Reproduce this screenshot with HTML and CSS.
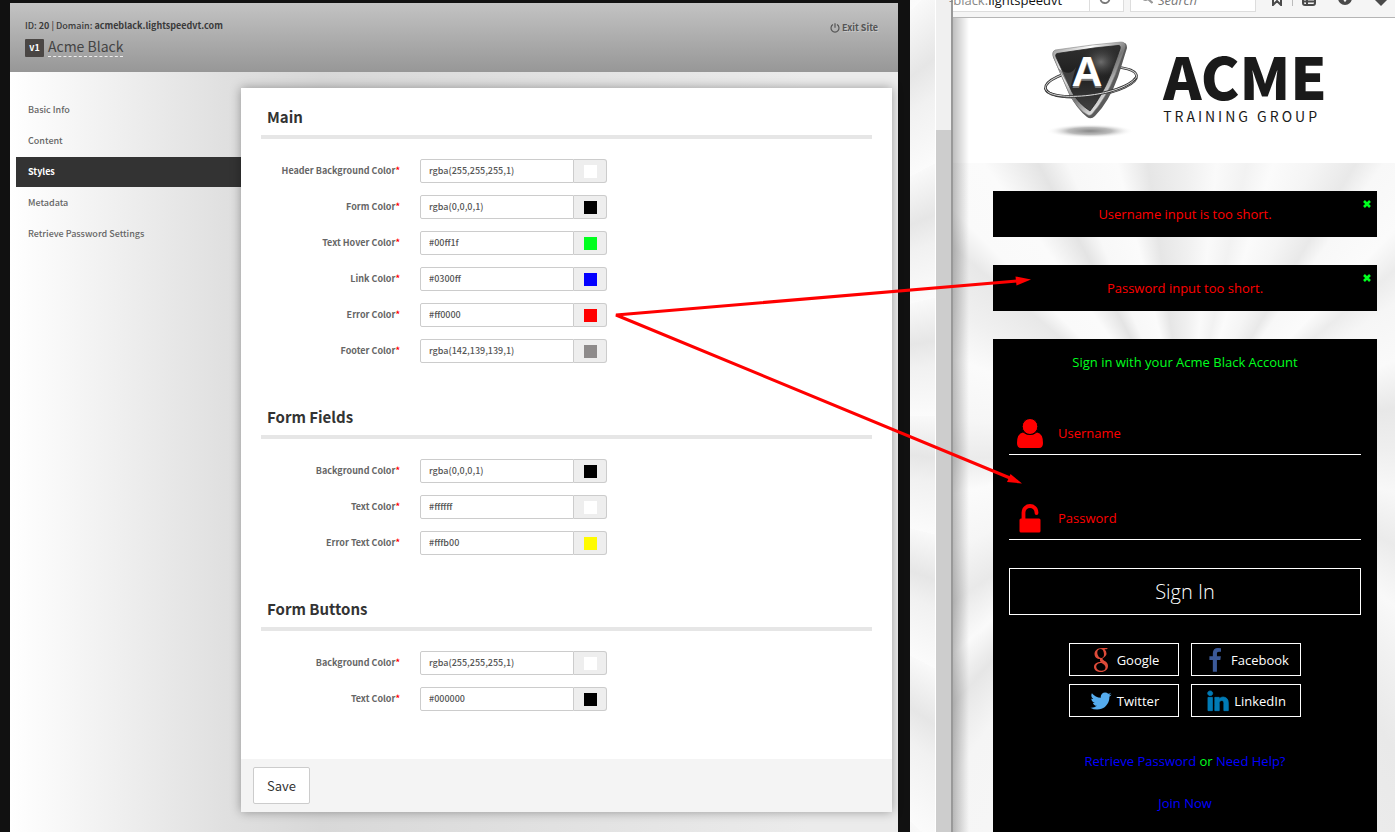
FILE: index.html
```html
<!DOCTYPE html>
<html lang="en">
<head>
<meta charset="utf-8">
<title>Acme Black – Styles</title>
<link rel="stylesheet" href="styles.css">
</head>
<body>
<div class="desktop">
  <section class="admin">
    <header class="admin-header">
      <div>
        <p class="site-id">ID: <b>20</b> | Domain: <b>acmeblack.lightspeedvt.com</b></p>
        <div class="site-title"><span class="version">v1</span><h1 class="site-name">Acme Black</h1></div>
      </div>
      <a class="exit" href="#exit">
        <svg class="exit-icon" viewBox="0 0 10 10"><path d="M3 1.6a4 4 0 1 0 4 0M5 .3v4.4" fill="none" stroke="currentColor" stroke-width="1.2"/></svg>
        Exit Site
      </a>
    </header>
    <div class="admin-body">
      <nav class="side-nav">
        <a class="side-link" href="#basic">Basic Info</a>
        <a class="side-link" href="#content">Content</a>
        <a class="side-link is-active" href="#styles">Styles</a>
        <a class="side-link" href="#metadata">Metadata</a>
        <a class="side-link" href="#retrieve">Retrieve Password Settings</a>
      </nav>
      <form class="panel">
        <div class="panel-content">
          <section class="group">
            <h2 class="group-title">Main</h2>
            <div class="fields">
              <div class="field"><label class="label" for="c1">Header Background Color<i class="req">*</i></label><div class="control"><input class="value" id="c1" value="rgba(255,255,255,1)"><button class="picker" type="button" aria-label="Pick header background color"><span class="swatch white"></span></button></div></div>
              <div class="field"><label class="label" for="c2">Form Color<i class="req">*</i></label><div class="control"><input class="value" id="c2" value="rgba(0,0,0,1)"><button class="picker" type="button" aria-label="Pick form color"><span class="swatch black"></span></button></div></div>
              <div class="field"><label class="label" for="c3">Text Hover Color<i class="req">*</i></label><div class="control"><input class="value" id="c3" value="#00ff1f"><button class="picker" type="button" aria-label="Pick text hover color"><span class="swatch green"></span></button></div></div>
              <div class="field"><label class="label" for="c4">Link Color<i class="req">*</i></label><div class="control"><input class="value" id="c4" value="#0300ff"><button class="picker" type="button" aria-label="Pick link color"><span class="swatch blue"></span></button></div></div>
              <div class="field"><label class="label" for="c5">Error Color<i class="req">*</i></label><div class="control"><input class="value" id="c5" value="#ff0000"><button class="picker" type="button" aria-label="Pick error color"><span class="swatch red"></span></button></div></div>
              <div class="field"><label class="label" for="c6">Footer Color<i class="req">*</i></label><div class="control"><input class="value" id="c6" value="rgba(142,139,139,1)"><button class="picker" type="button" aria-label="Pick footer color"><span class="swatch gray"></span></button></div></div>
            </div>
          </section>
          <section class="group">
            <h2 class="group-title">Form Fields</h2>
            <div class="fields">
              <div class="field"><label class="label" for="c7">Background Color<i class="req">*</i></label><div class="control"><input class="value" id="c7" value="rgba(0,0,0,1)"><button class="picker" type="button" aria-label="Pick field background color"><span class="swatch black"></span></button></div></div>
              <div class="field"><label class="label" for="c8">Text Color<i class="req">*</i></label><div class="control"><input class="value" id="c8" value="#ffffff"><button class="picker" type="button" aria-label="Pick field text color"><span class="swatch white"></span></button></div></div>
              <div class="field"><label class="label" for="c9">Error Text Color<i class="req">*</i></label><div class="control"><input class="value" id="c9" value="#fffb00"><button class="picker" type="button" aria-label="Pick error text color"><span class="swatch yellow"></span></button></div></div>
            </div>
          </section>
          <section class="group">
            <h2 class="group-title">Form Buttons</h2>
            <div class="fields">
              <div class="field"><label class="label" for="c10">Background Color<i class="req">*</i></label><div class="control"><input class="value" id="c10" value="rgba(255,255,255,1)"><button class="picker" type="button" aria-label="Pick button background color"><span class="swatch white"></span></button></div></div>
              <div class="field"><label class="label" for="c11">Text Color<i class="req">*</i></label><div class="control"><input class="value" id="c11" value="#000000"><button class="picker" type="button" aria-label="Pick button text color"><span class="swatch black"></span></button></div></div>
            </div>
          </section>
        </div>
        <footer class="panel-footer"><button class="save" type="button">Save</button></footer>
      </form>
    </div>
  </section>

  <div class="backdrop"></div>
  <div class="scrollbar"><div class="thumb"></div></div>

  <section class="browser">
    <div class="toolbar">
      <div class="url"><span class="url-text"><span class="url-dim">-black.</span>lightspeedvt</span><svg class="reload" viewBox="0 0 12 12"><path d="M1.5 5a4.5 4.5 0 0 0 9 1" fill="none" stroke="#777" stroke-width="1.8"/></svg></div>
      <div class="search"><svg class="lens" viewBox="0 0 12 12"><circle cx="4.5" cy="4.500" r="3.500" fill="none" stroke="#999" stroke-width="1.800"/><path d="M7 7l4.500 4" stroke="#999" stroke-width="2.200"/></svg><span class="search-text">Search</span></div>
      <svg class="tool star" viewBox="0 0 12 14"><path d="M2 0v13l4-4 4 4V0" fill="none" stroke="#4a4a4a" stroke-width="2"/></svg>
      <span class="divider"></span>
      <svg class="tool" viewBox="0 0 14 14"><path d="M1 5v6q0 2 2 2h8q2 0 2-2V5M0 9.500h14M5 5v8" fill="none" stroke="#4a4a4a" stroke-width="2"/></svg>
      <svg class="tool round" viewBox="0 0 14 14"><circle cx="7" cy="7" r="7" fill="#4a4a4a"/><path d="M5 7l2 3 2-3" fill="none" stroke="#f5f5f5" stroke-width="1.500"/></svg>
      <svg class="tool" viewBox="0 0 14 14"><path d="M0 7l7 7 7-7z" fill="#4a4a4a"/></svg>
    </div>
    <header class="brand">
      <svg class="shield" viewBox="0 0 100 100">
        <defs>
          <linearGradient id="rim" x1="0" y1="0" x2="1" y2="1"><stop offset="0" stop-color="#8c8c8c"/><stop offset=".3" stop-color="#fff"/><stop offset=".55" stop-color="#777"/><stop offset=".75" stop-color="#ddd"/><stop offset="1" stop-color="#666"/></linearGradient>
          <linearGradient id="core" x1="0" y1="0" x2="0" y2="1"><stop offset="0" stop-color="#303030"/><stop offset=".45" stop-color="#1f1f1f"/><stop offset="1" stop-color="#424242"/></linearGradient>
          <radialGradient id="shine"><stop offset="0" stop-color="#9b9b9b"/><stop offset="1" stop-color="#444" stop-opacity="0"/></radialGradient>
          <radialGradient id="ground"><stop offset="0" stop-color="#888"/><stop offset=".5" stop-color="#aaa" stop-opacity=".8"/><stop offset="1" stop-color="#fff" stop-opacity="0"/></radialGradient>
        </defs>
        <ellipse cx="49" cy="91" rx="44" ry="7" fill="url(#ground)"/>
        <ellipse cx="50" cy="42" rx="46" ry="14" transform="rotate(-8 50 42)" fill="none" stroke="#333" stroke-width="2.600"/>
        <ellipse cx="50" cy="42" rx="46" ry="14" transform="rotate(-8 50 42)" fill="none" stroke="#d0d0d0" stroke-width="1"/>
        <path d="M13 11Q11 12 12 17L28 54Q36 69 46 77Q50 80 54 76Q68 62 77 37L86 8Q86 2 81 3L53 5Z" fill="#5b5b5b"/>
        <path d="M14 10Q11 11 12 16L28 53Q37 70 47 75Q49 76 51 74Q65 58 74 35L84 7Q85 2 80 2L51 5Z" fill="url(#rim)" stroke="#888" stroke-width=".6"/>
        <path d="M16 13.500L53 8 77 5.500Q80 5 79 9L70 34Q61 56 49 71Q37 63 31 52L15 17Q14 14 16 13.500Z" fill="url(#core)" stroke="#222" stroke-width=".8"/>
        <ellipse cx="60" cy="22" rx="20" ry="17" fill="url(#shine)" opacity=".6"/>
        <path d="M17 28Q29 38 35 27L29 48Z" fill="#555" opacity=".6"/>
        <text class="shield-letter shade" x="46" y="48">A</text>
        <text class="shield-letter" x="46" y="46">A</text>
        <path d="M4.500 48C5 63 82 57 95.500 37" fill="none" stroke="#333" stroke-width="2.600"/>
        <path d="M4.500 48C5 63 82 57 95.500 37" fill="none" stroke="#ddd" stroke-width="1"/>
      </svg>
      <div class="wordmark"><span class="word">ACME</span><span class="tagline">TRAINING GROUP</span></div>
    </header>
    <main class="login">
      <div class="alert">Username input is too short.<button class="close" type="button" aria-label="Close"><svg class="cross" viewBox="0 0 8 8"><path d="M1 1l6 6M7 1L1 7" stroke="#00ff1f" stroke-width="2.600"/></svg></button></div>
      <div class="alert">Password input too short.<button class="close" type="button" aria-label="Close"><svg class="cross" viewBox="0 0 8 8"><path d="M1 1l6 6M7 1L1 7" stroke="#00ff1f" stroke-width="2.600"/></svg></button></div>
      <form class="card">
        <p class="card-title">Sign in with your Acme Black Account</p>
        <label class="entry"><svg class="entry-icon" viewBox="0 0 26 29"><path d="M6 13.500Q13 18.500 20 13.500Q26 14.500 26 24Q26 29 22 29H4Q0 29 0 24Q0 14.500 6 13.500Z" fill="red"/><ellipse cx="13" cy="7.500" rx="7.800" ry="8" fill="red" stroke="#000"/></svg><input class="entry-input" type="text" placeholder="Username" aria-label="Username"></label>
        <label class="entry"><svg class="entry-icon" viewBox="0 0 26 29"><path d="M6.500 15V8.500a6.500 6.500 0 0 1 13 0V9" fill="none" stroke="red" stroke-width="3.800" stroke-linecap="round"/><rect x="2.500" y="14.500" width="21" height="14" rx="1.500" fill="red"/></svg><input class="entry-input" type="password" placeholder="Password" aria-label="Password"></label>
        <button class="sign-in" type="button">Sign In</button>
        <div class="socials">
          <button class="social" type="button"><svg class="social-icon" viewBox="0 0 24 24"><path fill="#dd4b39" fill-rule="evenodd" d="M19 0H13C8 0 5.500 3 5.500 6C5.500 9 8 11 11 11Q10.500 13 11.700 14C8 14 5 15.500 5 19C5 22 8 24 12 24C16 24 19 21.500 19 18C19 13 13.500 13 13.500 10.800C13.500 9.500 17.500 9 17.500 5.500Q17.500 3 15.500 1.300H17.500ZM11.800 1C14 1 15 4 15 6.500C15 8.700 14 10 12.200 10C10 10 8.300 7 8.300 4.500C8.300 2.500 9.500 1 11.800 1ZM12.500 15C15 16.500 16.500 17.500 16.500 19.500C16.500 21.500 15 22.800 12.300 22.800C9 22.800 7.200 21 7.200 18.800C7.200 16.500 9.500 15 12.500 15Z"/></svg>Google</button>
          <button class="social" type="button"><svg class="social-icon" viewBox="0 0 1792 1792"><path fill="#3b5998" d="M1343 12v264h-157q-86 0-116 36t-30 108v189h293l-39 296h-254v875h-306v-875h-255v-296h255v-218q0-186 104-288.500t277-102.500q147 0 228 12z"/></svg>Facebook</button>
          <button class="social" type="button"><svg class="social-icon" viewBox="0 0 1792 1792"><path fill="#55acee" d="M1684 408q-67 98-162 167 1 14 1 42 0 130-38 259.500t-115.500 248.500-184.500 210.500-258 146-323 54.500q-271 0-496-145 35 4 78 4 225 0 401-138-105-2-188-64.500t-114-159.500q33 5 61 5 43 0 85-11-112-23-185.500-111.500t-73.500-205.500v-4q68 38 146 41-66-44-105-115t-39-154q0-88 44-163 121 149 294.500 238.500t371.500 99.500q-8-38-8-74 0-134 94.500-228.500t228.500-94.500q140 0 236 102 109-21 205-78-37 115-142 178 93-10 186-50z"/></svg>Twitter</button>
          <button class="social" type="button"><svg class="social-icon" viewBox="0 0 1792 1792"><path fill="#007bb6" stroke="#007bb6" stroke-width="60" d="M477 625v991h-330v-991h330zm21-306q1 73-50.500 122t-135.500 49h-2q-82 0-132-49t-50-122q0-74 51.500-122.500t134.500-48.500 133 48.500 51 122.500zm1166 729v568h-329v-530q0-105-40.500-164.500t-126.500-59.500q-63 0-105.500 34.500t-63.500 85.500q-11 30-11 81v553h-329q2-399 2-647t-1-296l-1-48h329v144h-2q20-32 41-56t56.500-52 87-43.500 114.500-15.500q171 0 275 113.500t104 332.500z"/></svg>LinkedIn</button>
        </div>
        <p class="help"><a class="link" href="#retrieve-password">Retrieve Password</a> or <a class="link" href="#help">Need Help?</a></p>
        <p class="join"><a class="link" href="#join">Join Now</a></p>
      </form>
    </main>
  </section>

  <svg class="arrows" viewBox="0 0 1395 832" preserveAspectRatio="none" aria-hidden="true">
    <path d="M1017 281L616 315L1010 478" fill="none" stroke="red" stroke-width="3"/>
    <path d="M1031 279.500L1015.500 276.500L1016.500 285.500ZM1022 483.500L1010.500 474L1007 482Z" fill="red"/>
  </svg>
</div>
</body>
</html>
```
FILE: styles.css
```css
* { box-sizing: border-box; }
body { margin: 0; background: #fff; }
h1, h2, p { margin: 0; font-weight: 400; }
a { text-decoration: none; }
button, input { margin: 0; font: inherit; color: inherit; }
svg { display: block; flex: none; }

.desktop {
  position: relative;
  display: grid;
  grid-template-columns: minmax(0, 910fr) 25px 18px minmax(0, 442fr);
  height: 100vh;
  overflow: hidden;
}

/* Admin window */
.admin {
  display: flex;
  flex-direction: column;
  border: solid #111;
  border-width: 3px 12px 0 10px;
  font: 10px/14px "Noto Sans CJK JP", "Noto Sans", sans-serif;
  color: #444;
}
.admin-header {
  display: flex;
  justify-content: space-between;
  align-items: flex-start;
  height: 69px;
  padding: 16px 20px 0 15px;
  background: linear-gradient(#c3c3c3, #979797);
}
.site-id { font-weight: 500; font-size: 9px; color: #3a3a3a; }
.site-id b { font-weight: 700; }
.site-title { display: flex; align-items: center; gap: 4px; margin-top: 2px; }
.version {
  width: 19px;
  margin-top: 4px;
  border-radius: 1px;
  background: #4a4644;
  color: #fff;
  font-weight: 700;
  font-size: 9px;
  line-height: 18px;
  text-align: center;
}
.site-name { font-size: 14px; line-height: 20px; border-bottom: 1px dashed #eee; }
.exit {
  display: flex;
  align-items: center;
  gap: 2px;
  margin-top: 2px;
  font-weight: 700;
  font-size: 9px;
  color: #555;
  text-shadow: 1px 1px 0 #c8c8c8;
}
.exit-icon { width: 10px; height: 10px; }
.admin-body {
  flex: 1;
  display: flex;
  align-items: flex-start;
  padding: 16px 6px 0;
  background: linear-gradient(90deg, #fff, #e0e0e0 24%, #d8d8d8 35%, #ebebeb 90%);
}
.side-nav { display: flex; flex-direction: column; gap: 1px; width: 225px; padding-top: 7px; }
.side-link { padding-left: 12px; font-weight: 500; font-size: 9px; line-height: 30px; color: #666; }
.side-link.is-active { background: #333; color: #fff; font-weight: 700; }

.panel { flex: 1; background: #fff; box-shadow: 0 0 10px rgba(0, 0, 0, .35); }
.panel-content { padding: 0 20px 23px; }
.group { padding-bottom: 25px; }
.group-title {
  padding: 19px 6px 8px;
  border-bottom: 4px solid #e6e6e6;
  font-weight: 700;
  font-size: 15px;
  line-height: 20px;
  color: #333;
}
.fields { display: flex; flex-direction: column; gap: 12px; padding-top: 20px; }
.field { display: flex; align-items: center; gap: 20px; }
.label { width: 139px; font-weight: 700; font-size: 9px; text-align: right; color: #666; }
.req { color: red; font-style: normal; }
.control { display: flex; width: 187px; height: 24px; }
.value {
  flex: 1;
  min-width: 0;
  padding: 0 8px;
  border: 1px solid #ccc;
  border-radius: 2px 0 0 2px;
  background: #fff;
  color: #555;
  font-size: 9px;
  font-weight: 500;
}
.picker {
  display: flex;
  align-items: center;
  justify-content: center;
  width: 33px;
  padding: 0;
  border: 1px solid #ccc;
  border-left: 0;
  border-radius: 0 3px 3px 0;
  background: #eee;
}
.swatch { width: 13px; height: 13px; }
.white { background: #fff; }
.black { background: #000; }
.green { background: #00ff1f; }
.blue { background: #0300ff; }
.red { background: #f00; }
.gray { background: #8e8b8b; }
.yellow { background: #fffb00; }
.panel-footer { padding: 8px 12px; background: #f4f4f4; }
.save {
  display: block;
  padding: 0 13px;
  border: 1px solid #ccc;
  border-radius: 2px;
  background: #fff;
  color: #333;
  font-size: 13px;
  line-height: 35px;
}

/* Gap between the windows */
.backdrop {
  background: repeating-conic-gradient(from 20deg at -450px 50%, #f9f9f9 0deg, #e6e6e6 5deg, #f1f1f1 8deg, #fbfbfb 14deg);
}
.scrollbar { padding-top: 130px; border: solid #fff; border-width: 0 1px; border-right: 2px solid #999; background: #f0f0f0; }
.thumb { height: 100%; background: #cdcdcd; }

/* Site preview */
.browser {
  display: flex;
  flex-direction: column;
  position: relative;
  font: 13px/24px "Open Sans", "Noto Sans", sans-serif;
}
.browser::before {
  content: "";
  position: absolute;
  inset: 18px auto 0 0;
  width: 16px;
  background: linear-gradient(90deg, rgba(0, 0, 0, .25), transparent);
}
.toolbar {
  display: flex;
  align-items: flex-start;
  height: 18px;
  border-bottom: 1px solid #b5b5b5;
  background: #f5f5f5;
}
.url, .search {
  flex: none;
  display: flex;
  align-items: flex-end;
  height: 12px;
  border: solid #ddd;
  border-width: 0 1px 1px 0;
  background: #fff;
  line-height: 22px;
  color: #111;
}
.url { width: 171px; margin-right: 6px; }
.url-text { width: 137px; height: 22px; border-right: 1px solid #ddd; white-space: nowrap; text-indent: -4px; }
.url-dim { color: #888; }
.reload { width: 12px; height: 12px; margin: 0 0 6px 9px; }
.search { width: 126px; padding-left: 10px; gap: 5px; border-left-width: 1px; }
.lens { width: 12px; height: 12px; margin-bottom: 7px; }
.search-text { font-style: italic; color: #777; }
.tool { width: 14px; height: 14px; margin: -8px 22px 0 0; }
.star { width: 12px; margin: -8px 9px 0 15px; }
.round { margin-top: -9px; }
.divider { flex: none; width: 1px; height: 6px; margin-right: 9px; background: #bbb; }

.brand {
  display: flex;
  align-items: flex-start;
  justify-content: center;
  gap: 22px;
  height: 145px;
  padding: 22px 20px 0 40px;
  background: #fff;
}
.shield { width: 100px; height: 100px; }
.shield-letter { font: 900 43px "Liberation Sans", sans-serif; fill: #fff; text-anchor: middle; }
.shade { fill: #777; }
.wordmark { display: flex; flex-direction: column; padding-top: 3px; color: #1a1a1a; }
.word { font: 900 58px/64px "Noto Sans CJK JP", sans-serif; }
.tagline { font: 14px/18px "Noto Sans CJK JP", sans-serif; letter-spacing: 3px; }

.login {
  flex: 1;
  display: flex;
  flex-direction: column;
  gap: 28px;
  padding: 28px 18px 0 40px;
  background: conic-gradient(from 0deg at 53% 42%,
    #f0f0f0 0deg, #fafafa 6deg, #f2f2f2 12deg, #fbfbfb 17deg, #f5f5f5 24deg, #e9e9e9 31deg, #f8f8f8 35deg,
    #fbfbfb 44deg, #ececec 50deg, #f6f6f6 56deg, #fafafa 68deg, #e8e8e8 80deg, #efefef 92deg, #f8f8f8 103deg,
    #ebebeb 116deg, #f9f9f9 128deg, #e9e9e9 146deg, #f7f7f7 200deg, #f5f5f5 215deg, #e6e6e6 222deg, #fafafa 228deg,
    #e9e9e9 236deg, #f6f6f6 246deg, #fbfbfb 258deg, #ebebeb 266deg, #f6f6f6 276deg, #fbfbfb 290deg, #f0f0f0 300deg,
    #e8e8e8 310deg, #fafafa 315deg, #fbfbfb 324deg, #e4e4e4 332deg, #f8f8f8 337deg, #fbfbfb 346deg, #e6e6e6 352deg, #f0f0f0 360deg);
}
.alert { position: relative; background: #000; color: red; line-height: 46px; text-align: center; }
.close { position: absolute; top: 9px; right: 6px; padding: 0; border: 0; background: none; }
.cross { width: 8px; height: 8px; }
.card { flex: 1; display: flex; flex-direction: column; padding: 11px 16px; background: #000; color: #00ff1f; text-align: center; }
.card-title { margin-bottom: 39px; }
.entry { display: flex; align-items: flex-start; gap: 15px; height: 42px; padding: 6px 8px 0; border-bottom: 1px solid #fff; margin-bottom: 43px; }
.entry-icon { width: 26px; height: 29px; }
.entry + .entry { margin-bottom: 28px; }
.entry-input { flex: 1; min-width: 0; padding: 0; border: 0; outline: 0; background: none; line-height: 28px; height: 28px; }
.entry-input::placeholder { color: red; opacity: 1; }
.sign-in { padding: 0; border: 1px solid #fff; background: #000; color: #fff; font-weight: 300; font-size: 20px; line-height: 45px; }
.socials { display: grid; grid-template-columns: 110px 110px; gap: 8px 12px; justify-content: center; margin: 28px 0 32px; }
.social { display: flex; align-items: center; justify-content: center; gap: 4px; height: 33px; padding: 0; border: 1px solid #fff; background: #000; color: #fff; }
.social-icon { width: 24px; height: 24px; }
.link { color: #0300ff; }
.join { margin-top: 18px; }

.arrows { position: absolute; inset: 0; width: 100%; height: 100%; pointer-events: none; }
```
